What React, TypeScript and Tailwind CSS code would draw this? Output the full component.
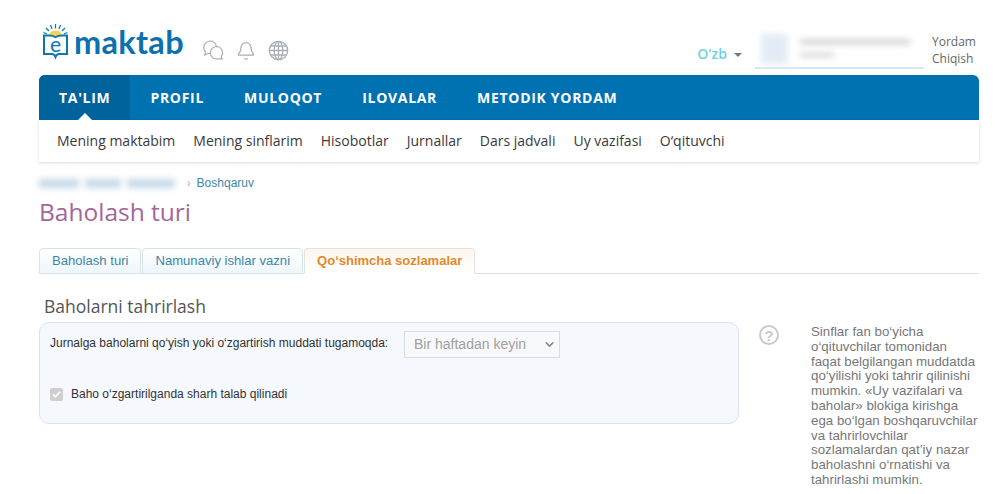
import { Bell, ChevronDown } from "lucide-react";

const navItems = ["TA'LIM", "PROFIL", "MULOQOT", "ILOVALAR", "METODIK YORDAM"];
const subItems = [
  "Mening maktabim",
  "Mening sinflarim",
  "Hisobotlar",
  "Jurnallar",
  "Dars jadvali",
  "Uy vazifasi",
  "O‘qituvchi",
];
const helpLines = [
  "Sinflar fan bo‘yicha",
  "o‘qituvchilar tomonidan",
  "faqat belgilangan muddatda",
  "qo‘yilishi yoki tahrir qilinishi",
  "mumkin. «Uy vazifalari va",
  "baholar» blokiga kirishga",
  "ega bo‘lgan boshqaruvchilar",
  "va tahrirlovchilar",
  "sozlamalardan qat’iy nazar",
  "baholashni o‘rnatishi va",
  "tahrirlashi mumkin.",
];

function LogoMark() {
  return (
    <svg width="27" height="36" viewBox="0 0 27 36" fill="none">
      <path d="M13.5 1v4.5M8.5 2l1.6 4M18.5 2l-1.6 4M4 5l3 3M23 5l-3 3M1.5 9.5l3.5 1.5M25.5 9.5L22 11" stroke="#0b78b4" strokeWidth="1.2" />
      <path d="M7 12.5a6.5 5 0 0 1 13 0z" fill="#f5d44f" />
      <path
        d="M2 12.5h5c3 0 5 .6 6.5 1.6 1.5-1 3.5-1.6 6.5-1.6h5V31h-7.5c-2 0-3.500 1.300-4 3-.5-1.700-2-3-4-3H2z"
        stroke="#0b78b4"
        strokeWidth="2"
        fill="#fff"
      />
      <text x="13.5" y="29" textAnchor="middle" fontSize="21" fontFamily="Lato, sans-serif" fontWeight="400" fill="#0b78b4">
        e
      </text>
    </svg>
  );
}

function ChatIcon() {
  return (
    <svg width="23" height="23" viewBox="0 0 23 23" fill="none" stroke="#a9aeb5" strokeWidth="1.2">
      <path d="M8 14.5H5.5L2.8 16l.7-3A6.6 6.6 0 0 1 8 2a6.5 6.5 0 0 1 6.3 5" />
      <path d="M14.5 7.5a6.2 6.2 0 1 0 0 12.4h5.7l-1-2.4a6.2 6.2 0 0 0-4.7-10z" />
    </svg>
  );
}

function GlobeIcon() {
  return (
    <svg width="21" height="21" viewBox="0 0 21 21" fill="none" stroke="#a9aeb5" strokeWidth="1.3">
      <circle cx="10.5" cy="10.5" r="9.2" />
      <ellipse cx="10.5" cy="10.5" rx="4.3" ry="9.2" />
      <path d="M10.5 1.3v18.400M1.300 10.500h18.400M2.500 6h16M2.500 15h16" />
    </svg>
  );
}

function HelpIcon() {
  return (
    <div className="flex h-[20px] w-[20px] items-center justify-center rounded-full border-2 border-[#c9c9c9] text-[15px] leading-none font-bold text-[#c9c9c9] [font-family:'Liberation_Sans',sans-serif]">
      ?
    </div>
  );
}

export default function App() {
  return (
    <div className="h-[494px] w-[1000px] overflow-hidden bg-white pr-[21px] pl-[39px] [font-family:'Open_Sans',sans-serif]">
      <header className="flex h-[75px] items-start">
        <div className="mt-[22px] ml-[3px] flex items-center">
          <LogoMark />
          <span className="mt-[2px] ml-[5px] text-[32.5px] leading-[36px] font-bold tracking-[0.3px] text-[#0b72ae] [font-family:Lato,sans-serif]">
            maktab
          </span>
        </div>
        <div className="mt-[39px] ml-[18px] flex items-center">
          <ChatIcon />
          <span className="ml-[11px]">
            <Bell size={20} strokeWidth={1.5} color="#a9aeb5" />
          </span>
          <span className="ml-[12px]">
            <GlobeIcon />
          </span>
        </div>
        <div className="mt-[46px] ml-auto flex items-center">
          <span className="text-[14px] leading-4 font-semibold text-[#6fd0e4]">O'zb</span>
          <span className="mt-[1px] ml-[7px] h-0 w-0 border-x-4 border-t-4 border-x-transparent border-t-[#777]" />
        </div>
        <div className="mt-[30px] ml-[13px] h-[39px] w-[169px] border-b-2 border-[#dbe6f0]">
          <div className="flex h-[37px] items-center pl-[6px] blur-[3px]">
            <div className="h-[30px] w-[27px] bg-[#e3ecf6]" />
            <div className="ml-[12px] flex flex-col gap-[9px]">
              <div className="h-[4px] w-[110px] bg-[#c4c4c4]" />
              <div className="h-[4px] w-[34px] bg-[#d0d0d0]" />
            </div>
          </div>
        </div>
        <div className="mt-[33px] ml-[8px] flex w-[47px] flex-col text-[12px] leading-[17px] text-[#666]">
          <span>Yordam</span>
          <span>Chiqish</span>
        </div>
      </header>

      <nav className="flex h-[45px] rounded-t-[6px] bg-[#0071b1]">
        {navItems.map((item, i) => (
          <div
            key={item}
            className={`relative flex items-center px-[20px] text-[14px] font-bold tracking-[0.7px] text-white ${
              i === 0 ? "rounded-tl-[6px] bg-[#00639b]" : ""
            }`}
          >
            {item}
            {i === 0 && (
              <span className="absolute bottom-0 left-1/2 h-0 w-0 -translate-x-1/2 border-x-[7px] border-b-[7px] border-x-transparent border-b-white" />
            )}
          </div>
        ))}
      </nav>
      <div className="flex h-[42px] items-center gap-[18px] bg-white pb-[2px] pl-[18px] text-[14px] text-[#3a3a3a] shadow-[0_1px_3px_rgba(0,0,0,0.15)]">
        {subItems.map((item) => (
          <span key={item}>{item}</span>
        ))}
      </div>

      <div className="mt-[13px] flex h-[16px] items-center text-[12px]">
        <div className="flex w-[138px] gap-[6px] blur-[3px]">
          <div className="h-[9px] w-[40px] bg-[#c6d9e8]" />
          <div className="h-[9px] w-[36px] bg-[#c6d9e8]" />
          <div className="h-[9px] w-[48px] bg-[#c6d9e8]" />
        </div>
        <span className="mr-[6px] ml-[10px] text-[#aaa]">›</span>
        <span className="text-[#3f86a8] [font-family:'Liberation_Sans',sans-serif]">Boshqaruv</span>
      </div>
      <h1 className="mt-[4px] text-[24.5px] leading-[34px] font-normal text-[#a3659a]">Baholash turi</h1>

      <div className="mt-[19px] flex h-[26px] items-end gap-[1px] border-b border-[#dbe4ea] text-[13.1px] [font-family:'Liberation_Sans',sans-serif]">
        <div className="-mb-px flex h-[26px] items-center rounded-t-[4px] border border-[#d5e3ea] bg-gradient-to-b from-white to-[#edf7fc] px-[12px] text-[#3f86a8]">
          Baholash turi
        </div>
        <div className="-mb-px flex h-[26px] items-center rounded-t-[4px] border border-[#d5e3ea] bg-gradient-to-b from-white to-[#edf7fc] px-[12px] text-[#3f86a8]">
          Namunaviy ishlar vazni
        </div>
        <div className="-mb-px flex h-[26px] items-center rounded-t-[4px] border border-[#e3e3e3] border-b-white bg-gradient-to-b from-[#fff6ee] to-white px-[12px] text-[13px] font-bold text-[#e08a2e]">
          Qo‘shimcha sozlamalar
        </div>
      </div>

      <h2 className="mt-[20px] ml-[5px] text-[17.5px] leading-[24px] font-normal text-[#555]">Baholarni tahrirlash</h2>

      <div className="flex">
        <section className="mt-[4px] h-[102px] w-[700px] rounded-[10px] border border-[#dbe3ee] bg-[#f5f8fd] pt-[8px] pl-[10px] text-[12px] text-[#333] [font-family:'Liberation_Sans',sans-serif]">
          <div className="flex items-center">
            <span className="-mt-[3px] w-[354px]">Jurnalga baholarni qo‘yish yoki o‘zgartirish muddati tugamoqda:</span>
            <div className="flex h-[27px] w-[156px] items-center justify-between border border-[#dcdcdc] bg-[#f8f9fb] pr-[3px] pl-[9px] text-[14px] text-[#a0a0a0]">
              Bir haftadan keyin
              <ChevronDown size={13} strokeWidth={3} color="#8a8a8a" />
            </div>
          </div>
          <div className="mt-[27px] flex items-center">
            <div className="flex h-[13px] w-[13px] items-center justify-center rounded-[2px] bg-[#cfcfcf]">
              <svg width="9" height="9" viewBox="0 0 9 9" fill="none" stroke="#fff" strokeWidth="1.6">
                <path d="M1 4.5l2.4 2.4L8 1.8" />
              </svg>
            </div>
            <span className="ml-[8px]">Baho o‘zgartirilganda sharh talab qilinadi</span>
          </div>
        </section>

        <div className="ml-[20px] pt-[7px]">
          <HelpIcon />
        </div>
        <div className="mt-[7px] ml-[32px] flex flex-col text-[13.3px] leading-[14.8px] whitespace-nowrap text-[#777] [font-family:'Liberation_Sans',sans-serif]">
          {helpLines.map((line) => (
            <span key={line}>{line}</span>
          ))}
        </div>
      </div>
    </div>
  );
}
